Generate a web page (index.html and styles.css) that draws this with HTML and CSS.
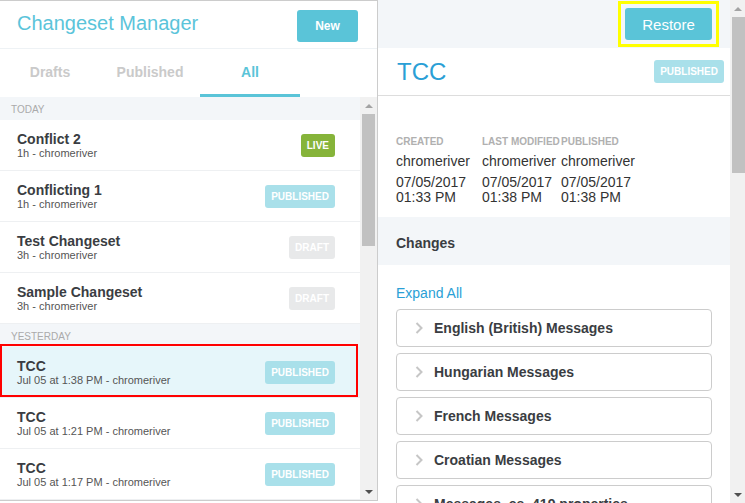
FILE: index.html
```html
<!DOCTYPE html>
<html lang="en">
<head>
    <meta charset="UTF-8">
    <meta name="viewport" content="width=device-width, initial-scale=1.0">
    <title>Changeset Manager</title>
    <link rel="stylesheet" href="styles.css">
</head>
<body>
<div class="app">
    <aside class="sidebar">
        <div class="sidebar-header">
            <h1>Changeset Manager</h1>
            <button class="btn btn-new">New</button>
        </div>
        <div class="tabs">
            <div class="tab">Drafts</div>
            <div class="tab">Published</div>
            <div class="tab active">All</div>
        </div>
        <div class="list-wrap">
            <div class="list">
                <div class="group">Today</div>
                <div class="item">
                    <div class="item-text">
                        <div class="item-title">Conflict 2</div>
                        <div class="item-sub">1h - chromeriver</div>
                    </div>
                    <span class="badge live">Live</span>
                </div>
                <div class="item">
                    <div class="item-text">
                        <div class="item-title">Conflicting 1</div>
                        <div class="item-sub">1h - chromeriver</div>
                    </div>
                    <span class="badge published">Published</span>
                </div>
                <div class="item">
                    <div class="item-text">
                        <div class="item-title">Test Changeset</div>
                        <div class="item-sub">3h - chromeriver</div>
                    </div>
                    <span class="badge draft">Draft</span>
                </div>
                <div class="item">
                    <div class="item-text">
                        <div class="item-title">Sample Changeset</div>
                        <div class="item-sub">3h - chromeriver</div>
                    </div>
                    <span class="badge draft">Draft</span>
                </div>
                <div class="group">Yesterday</div>
                <div class="item selected">
                    <div class="item-text">
                        <div class="item-title">TCC</div>
                        <div class="item-sub">Jul 05 at 1:38 PM - chromeriver</div>
                    </div>
                    <span class="badge published">Published</span>
                </div>
                <div class="item">
                    <div class="item-text">
                        <div class="item-title">TCC</div>
                        <div class="item-sub">Jul 05 at 1:21 PM - chromeriver</div>
                    </div>
                    <span class="badge published">Published</span>
                </div>
                <div class="item">
                    <div class="item-text">
                        <div class="item-title">TCC</div>
                        <div class="item-sub">Jul 05 at 1:17 PM - chromeriver</div>
                    </div>
                    <span class="badge published">Published</span>
                </div>
            </div>
            <div class="scrollbar">
                <div class="arrow"><span class="tri-up"></span></div>
                <div class="track"><div class="thumb list-thumb"></div></div>
                <div class="arrow"><span class="tri-down"></span></div>
            </div>
        </div>
    </aside>

    <main class="detail">
        <div class="detail-main">
            <div class="detail-header">
                <span class="highlight"><button class="btn btn-restore">Restore</button></span>
            </div>
            <div class="detail-title">
                <h2>TCC</h2>
                <span class="badge published">Published</span>
            </div>
            <div class="meta">
                <div class="meta-col">
                    <div class="meta-label">Created</div>
                    <div class="meta-value">chromeriver</div>
                    <div class="meta-date">07/05/2017<br>01:33 PM</div>
                </div>
                <div class="meta-col">
                    <div class="meta-label">Last Modified</div>
                    <div class="meta-value">chromeriver</div>
                    <div class="meta-date">07/05/2017<br>01:38 PM</div>
                </div>
                <div class="meta-col">
                    <div class="meta-label">Published</div>
                    <div class="meta-value">chromeriver</div>
                    <div class="meta-date">07/05/2017<br>01:38 PM</div>
                </div>
            </div>
            <div class="section-head">Changes</div>
            <a class="expand-all" href="#">Expand All</a>
            <div class="changes">
                <div class="change">
                    <svg class="chevron" width="8" height="12" viewBox="0 0 8 12"><polyline points="1.5,1 6.5,6 1.5,11" fill="none" stroke="#c6c6c6" stroke-width="2"/></svg>
                    <span>English (British) Messages</span>
                </div>
                <div class="change">
                    <svg class="chevron" width="8" height="12" viewBox="0 0 8 12"><polyline points="1.5,1 6.5,6 1.5,11" fill="none" stroke="#c6c6c6" stroke-width="2"/></svg>
                    <span>Hungarian Messages</span>
                </div>
                <div class="change">
                    <svg class="chevron" width="8" height="12" viewBox="0 0 8 12"><polyline points="1.5,1 6.5,6 1.5,11" fill="none" stroke="#c6c6c6" stroke-width="2"/></svg>
                    <span>French Messages</span>
                </div>
                <div class="change">
                    <svg class="chevron" width="8" height="12" viewBox="0 0 8 12"><polyline points="1.5,1 6.5,6 1.5,11" fill="none" stroke="#c6c6c6" stroke-width="2"/></svg>
                    <span>Croatian Messages</span>
                </div>
                <div class="change">
                    <svg class="chevron" width="8" height="12" viewBox="0 0 8 12"><polyline points="1.5,1 6.5,6 1.5,11" fill="none" stroke="#c6c6c6" stroke-width="2"/></svg>
                    <span>Messages_es_419.properties</span>
                </div>
            </div>
        </div>
        <div class="scrollbar scrollbar-thin">
            <div class="arrow"><span class="tri-up"></span></div>
            <div class="track"><div class="thumb detail-thumb"></div></div>
            <div class="arrow"><span class="tri-down"></span></div>
        </div>
    </main>
</div>
</body>
</html>
```

FILE: styles.css
```css
* { margin: 0; padding: 0; box-sizing: border-box; }
body {
    font-family: "Liberation Sans", Arial, sans-serif;
    background: #fff;
    color: #333;
    overflow: hidden;
}
.app {
    display: flex;
    height: 503px;
}

/* left column */
.sidebar {
    width: 378px;
    height: 501px;
    border-top: 1px solid #ccc;
    border-right: 1px solid #ccc;
    border-bottom: 1px solid #ccc;
    display: flex;
    flex-direction: column;
    flex-shrink: 0;
}
.sidebar-header {
    height: 48px;
    border-bottom: 1px solid #eef2f5;
    display: flex;
    align-items: center;
    justify-content: space-between;
    padding: 0 19px 0 17px;
}
.sidebar-header h1 {
    font-size: 20px;
    font-weight: normal;
    color: #5bc4da;
    margin-top: -2px;
}
.btn {
    font-family: inherit;
    background: #5ac4d8;
    color: #fff;
    border: none;
    border-radius: 3px;
    height: 32px;
    cursor: pointer;
}
.btn-new {
    width: 61px;
    font-size: 12px;
    font-weight: bold;
    margin-top: 2px;
}
.tabs {
    display: flex;
    height: 48px;
}
.tab {
    width: 100px;
    display: flex;
    align-items: center;
    justify-content: center;
    font-size: 14px;
    font-weight: bold;
    color: #cacaca;
    border-bottom: 3px solid transparent;
    padding-top: 1px;
}
.tab.active {
    color: #5ac4d8;
    border-bottom-color: #5ac4d8;
}
.list-wrap {
    flex: 1;
    display: flex;
    min-height: 0;
}
.list {
    width: 360px;
    overflow: hidden;
}
.group {
    height: 23px;
    background: #f3f6f9;
    color: #aaa;
    font-size: 10px;
    text-transform: uppercase;
    padding: 7px 0 0 11px;
}
.item {
    position: relative;
    height: 51px;
    border-bottom: 1px solid #eef0f2;
    display: flex;
    align-items: center;
    justify-content: space-between;
    padding: 0 25px 0 17px;
}
.item.selected { background: #e6f6fa; }
/* annotation frame drawn over the selected row */
.item.selected::after {
    content: "";
    position: absolute;
    top: -3px;
    left: 0;
    right: 2px;
    bottom: 0;
    border: 2px solid #f00;
}
.item-title {
    font-size: 14px;
    font-weight: bold;
    line-height: 15px;
    color: #3a3d42;
}
.item-sub {
    font-size: 11px;
    line-height: 12px;
    color: #555;
}
.badge {
    display: inline-block;
    height: 23px;
    line-height: 23px;
    padding: 0 6px;
    border-radius: 3px;
    font-size: 10px;
    font-weight: bold;
    color: #fff;
    text-transform: uppercase;
}
.badge.live { background: #86b43a; }
.badge.published { background: #a9e0ea; }
.badge.draft { background: #e8e9ea; }

/* fake scrollbars */
.scrollbar {
    width: 17px;
    background: #f1f1f1;
    display: flex;
    flex-direction: column;
    flex-shrink: 0;
}
.scrollbar-thin { width: 15px; }
.arrow {
    height: 17px;
    display: flex;
    align-items: center;
    justify-content: center;
}
.tri-up, .tri-down {
    width: 0;
    height: 0;
    border-left: 4px solid transparent;
    border-right: 4px solid transparent;
}
.tri-up { border-bottom: 4px solid #a3a3a3; }
.tri-down { border-top: 4px solid #505050; }
.track { flex: 1; }
.thumb {
    background: #c1c1c1;
    margin: 0 2px;
}
.list-thumb { height: 132px; }
.detail-thumb { height: 156px; margin: 0 0 0 2px; }

/* right column */
.detail {
    flex: 1;
    display: flex;
    height: 503px;
}
.detail-main {
    flex: 1;
    overflow: hidden;
}
.detail-header {
    height: 48px;
    background: #f3f6f9;
    display: flex;
    justify-content: flex-end;
    align-items: flex-start;
    padding: 1px 11px 0 0;
}
/* yellow annotation frame round the Restore button */
.highlight {
    display: block;
    border: 3px solid #ffff00;
    padding: 4px;
}
.btn-restore {
    display: block;
    width: 87px;
    font-size: 15px;
}
.detail-title {
    height: 48px;
    border-bottom: 1px solid #ddd;
    display: flex;
    align-items: center;
    justify-content: space-between;
    padding: 0 6px 0 19px;
}
.detail-title h2 {
    font-size: 24px;
    font-weight: normal;
    color: #2a9fd6;
}
.meta {
    display: grid;
    grid-template-columns: 86px 79px auto;
    padding: 40px 18px 12px;
}
.meta-label {
    font-size: 10px;
    font-weight: bold;
    line-height: 12px;
    color: #b0b0b0;
    text-transform: uppercase;
    white-space: nowrap;
    margin-bottom: 5px;
}
.meta-value {
    font-size: 14px;
    line-height: 16px;
    margin-bottom: 6px;
}
.meta-date {
    font-size: 14px;
    line-height: 15px;
}
.section-head {
    height: 48px;
    background: #f3f6f9;
    font-size: 14px;
    font-weight: bold;
    color: #3a3d42;
    display: flex;
    align-items: center;
    padding: 3px 18px 0;
}
.expand-all {
    display: block;
    margin: 20px 18px 0;
    font-size: 14px;
    line-height: 17px;
    color: #2a9fd6;
    text-decoration: none;
}
.changes {
    display: flex;
    flex-direction: column;
    gap: 6px;
    margin: 7px 18px 0;
}
.change {
    height: 38px;
    flex-shrink: 0;
    border: 1px solid #ccc;
    border-radius: 4px;
    display: flex;
    align-items: center;
    gap: 11px;
    padding-left: 18px;
    font-size: 14px;
    font-weight: bold;
    color: #3a3d42;
}
```
